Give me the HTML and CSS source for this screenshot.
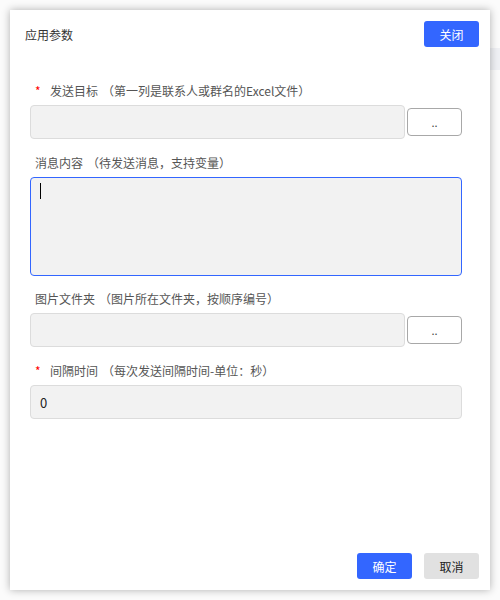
FILE: index.html
```html
<!DOCTYPE html>
<html lang="zh-CN">
<head>
  <meta charset="UTF-8">
  <meta name="viewport" content="width=device-width, initial-scale=1">
  <title>应用参数</title>
  <link rel="stylesheet" href="styles.css">
</head>
<body>

<div class="dialog">
  <div class="dialog-header">
    <span class="dialog-title">应用参数</span>
    <button class="btn btn-primary">关闭</button>
  </div>

  <div class="dialog-body">
    <div class="field">
      <label class="field-label"><span class="required">*</span>发送目标<span class="hint">（第一列是联系人或群名的Excel文件）</span></label>
      <div class="input-row">
        <input type="text" class="input">
        <button class="btn btn-browse">..</button>
      </div>
    </div>

    <div class="field">
      <label class="field-label">消息内容<span class="hint">（待发送消息，支持变量）</span></label>
      <div class="textarea focused"><span class="caret"></span></div>
    </div>

    <div class="field">
      <label class="field-label">图片文件夹<span class="hint">（图片所在文件夹，按顺序编号）</span></label>
      <div class="input-row">
        <input type="text" class="input">
        <button class="btn btn-browse">..</button>
      </div>
    </div>

    <div class="field">
      <label class="field-label"><span class="required">*</span>间隔时间<span class="hint">（每次发送间隔时间-单位：秒）</span></label>
      <input type="text" class="input" value="0">
    </div>
  </div>

  <div class="dialog-footer">
    <button class="btn btn-primary">确定</button>
    <button class="btn btn-cancel">取消</button>
  </div>
</div>

</body>
</html>
```

FILE: styles.css
```css
body {
  margin: 0;
  padding: 10px;
  height: 600px;
  box-sizing: border-box;
  font-family: "Noto Sans CJK SC", "Noto Sans", sans-serif;
  font-size: 12px;
  background:
    linear-gradient(to right, #fbfbfb 490px, transparent 490px),
    linear-gradient(#fbfbfb 48px, #eff0f4 48px, #eff0f4 70px, #fbfbfb 70px);
}

.dialog {
  width: 480px;
  height: 580px;
  background: #fff;
  box-shadow: 0 0 8px rgba(0, 0, 0, 0.3);
  display: flex;
  flex-direction: column;
}

.dialog-header {
  display: flex;
  align-items: center;
  justify-content: space-between;
  padding: 11px 11px 0 15px;
  height: 26px;
}

.dialog-title {
  color: #333;
  font-size: 12px;
}

.btn {
  font-family: inherit;
  font-size: 12px;
  border: none;
  border-radius: 3px;
  cursor: pointer;
  padding: 0;
}

.btn-primary {
  width: 55px;
  height: 26px;
  background: #3366ff;
  color: #fff;
}

.btn-cancel {
  width: 55px;
  height: 26px;
  background: #e1e1e1;
  color: #222;
}

.dialog-body {
  flex: 1;
  padding: 34px 28px 0 20px;
}

.field {
  margin-bottom: 14px;
}

.field-label {
  display: block;
  height: 20px;
  line-height: 20px;
  margin-bottom: 4px;
  padding-left: 5px;
  color: #555;
}

.required {
  color: #f00;
  display: inline-block;
  width: 15px;
}

.hint {
  margin-left: 4px;
}

.input-row {
  display: flex;
  align-items: center;
  gap: 2px;
}

.input {
  display: block;
  box-sizing: border-box;
  width: 100%;
  height: 34px;
  padding: 0 9px;
  border: 1px solid #dcdcdc;
  border-radius: 4px;
  background: #f2f2f2;
  font-family: inherit;
  font-size: 13px;
  color: #222;
  outline: none;
}

.input-row .input {
  flex: 1;
}

.btn-browse {
  flex: none;
  width: 55px;
  height: 28px;
  background: #fff;
  border: 1px solid #a8a8a8;
  border-radius: 4px;
  color: #444;
  font-size: 11px;
}

.textarea {
  box-sizing: border-box;
  height: 99px;
  margin-bottom: -1px;
  border: 1px solid #dcdcdc;
  border-radius: 4px;
  background: #f2f2f2;
  padding: 5px 9px;
}

.textarea.focused {
  border-color: #3366ff;
}

.caret {
  display: block;
  width: 1px;
  height: 16px;
  background: #000;
}

.dialog-footer {
  display: flex;
  justify-content: flex-end;
  gap: 12px;
  padding: 0 11px 11px 0;
}
```
